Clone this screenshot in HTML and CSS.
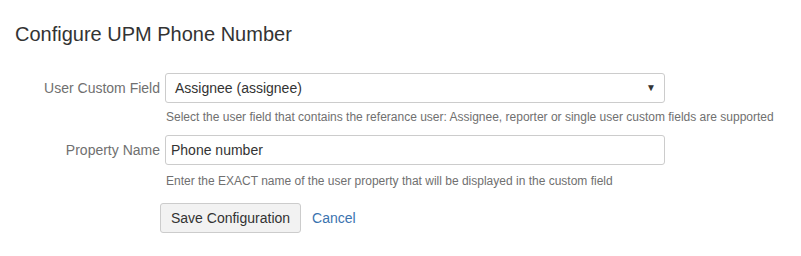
FILE: index.html
```html
<!DOCTYPE html>
<html>
<head>
<meta charset="utf-8">
<link rel="stylesheet" href="styles.css">
</head>
<body>
<div class="page">
  <h1 class="title">Configure UPM Phone Number</h1>
  <form class="form">
    <div class="row">
      <label class="label">User Custom Field</label>
      <div class="field">
        <div class="select">
          <span>Assignee (assignee)</span>
          <span class="caret">&#9660;</span>
        </div>
        <div class="help">Select the user field that contains the referance user: Assignee, reporter or single user custom fields are supported</div>
      </div>
    </div>
    <div class="row">
      <label class="label">Property Name</label>
      <div class="field">
        <div class="input">Phone number</div>
        <div class="help help-second">Enter the EXACT name of the user property that will be displayed in the custom field</div>
      </div>
    </div>
    <div class="buttons">
      <span class="button">Save Configuration</span>
      <a class="cancel">Cancel</a>
    </div>
  </form>
</div>
</body>
</html>
```
FILE: styles.css
```css
html, body {
  margin: 0;
  padding: 0;
  background: #fff;
}
body {
  font-family: "Liberation Sans", Arial, sans-serif;
  color: #333;
  font-size: 14px;
}
.page {
  padding: 20px 15px 0 15px;
}
.title {
  margin: 0;
  font-size: 20px;
  font-weight: normal;
  line-height: 28px;
  color: #333;
}
.form {
  margin-top: 25px;
}
.row {
  display: flex;
  margin-bottom: 10px;
}
.label {
  width: 145px;
  text-align: right;
  color: #707070;
  line-height: 30px;
  padding-right: 5px;
}
.field {
  display: flex;
  flex-direction: column;
}
.select, .input {
  box-sizing: border-box;
  width: 500px;
  height: 30px;
  border: 1px solid #ccc;
  border-radius: 3px;
  line-height: 28px;
  font-size: 14px;
  color: #333;
}
.select {
  display: flex;
  justify-content: space-between;
  padding: 0 8px 0 9px;
}
.caret {
  font-size: 10px;
  color: #333;
}
.input {
  padding: 0 5px;
}
.help {
  font-size: 12px;
  color: #707070;
  line-height: 16px;
  margin-top: 6px;
  padding-left: 1px;
}
.help-second {
  margin-top: 8px;
}
.buttons {
  display: flex;
  align-items: center;
  margin-top: 14px;
  padding-left: 145px;
}
.button {
  box-sizing: border-box;
  height: 30px;
  line-height: 28px;
  padding: 0 10px;
  border: 1px solid #ccc;
  border-radius: 3px;
  background: #f2f2f2;
  color: #333;
}
.cancel {
  margin-left: 11px;
  color: #3b73af;
}
```
